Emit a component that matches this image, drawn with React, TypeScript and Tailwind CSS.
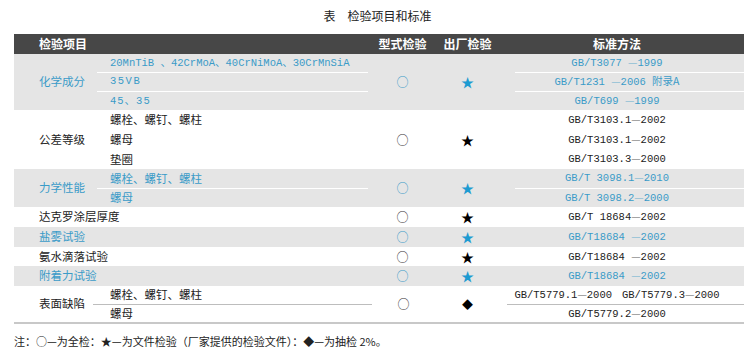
import React from 'react';

const CJK = "font-['Noto_Sans_CJK_SC',sans-serif]";
const MONO = "font-['Liberation_Mono','Noto_Sans_CJK_SC',monospace]";

// a standard code like GB/T3077—1999, dash drawn lighter as in the print
function Code({ a, b, tail }: { a: string; b: string; tail?: string }) {
  return (
    <span className={`${MONO} text-[10.5px] whitespace-pre`}>
      {a}
      <span className={`${CJK} opacity-50`}>—</span>
      {b}
      {tail && <span className={CJK}>{tail}</span>}
    </span>
  );
}

function Mark({ kind, blue }: { kind: 'circle' | 'star' | 'diamond'; blue?: boolean }) {
  const color = blue ? 'text-[#1d9bd1]' : 'text-black';
  if (kind === 'circle')
    return <span className={`${CJK} text-[12px] ${blue ? 'text-[#3a9bc8]' : 'text-[#333]'}`}>○</span>;
  if (kind === 'star') return <span className={`${CJK} text-[13px] ${color}`}>★</span>;
  return <span className={`${CJK} text-[11px] ${color}`}>◆</span>;
}

type Group = {
  name: string;
  blue: boolean;
  height: string;
  subs: React.ReactNode[];
  codes: React.ReactNode[];
  mark: 'star' | 'diamond';
  lines: boolean;
};

const groups: Group[] = [
  {
    name: '化学成分',
    blue: true,
    height: 'h-[56px]',
    lines: true,
    mark: 'star',
    subs: [
      <span className={`${MONO} text-[10.5px] whitespace-pre`}>
        20MnTiB <span className={CJK}>、</span>42CrMoA<span className={CJK}>、</span>40CrNiMoA<span className={CJK}>、</span>30CrMnSiA
      </span>,
      <span className={`${MONO} text-[10.5px] tracking-[1.5px]`}>35VB</span>,
      <span className={`${MONO} text-[10.5px] tracking-[1px] whitespace-pre`}>
        45<span className={CJK}>、</span>35
      </span>,
    ],
    codes: [
      <Code a="GB/T3077 " b="1999" />,
      <Code a="GB/T1231 " b="2006 " tail="附录A" />,
      <Code a="GB/T699 " b="1999" />,
    ],
  },
  {
    name: '公差等级',
    blue: false,
    height: 'h-[59px]',
    lines: false,
    mark: 'star',
    subs: ['螺栓、螺钉、螺柱', '螺母', '垫圈'],
    codes: [<Code a="GB/T3103.1" b="2002" />, <Code a="GB/T3103.1" b="2002" />, <Code a="GB/T3103.3" b="2000" />],
  },
  {
    name: '力学性能',
    blue: true,
    height: 'h-[38px]',
    lines: true,
    mark: 'star',
    subs: ['螺栓、螺钉、螺柱', '螺母'],
    codes: [<Code a="GB/T 3098.1" b="2010" />, <Code a="GB/T 3098.2" b="2000" />],
  },
];

const singles = [
  { name: '达克罗涂层厚度', blue: false, h: 'h-[20px]', code: <Code a="GB/T 18684" b="2002" /> },
  { name: '盐雾试验', blue: true, h: 'h-[20px]', code: <Code a="GB/T18684 " b="2002" /> },
  { name: '氨水滴落试验', blue: false, h: 'h-[19px]', code: <Code a="GB/T18684 " b="2002" /> },
  { name: '附着力试验', blue: true, h: 'h-[20px]', code: <Code a="GB/T18684 " b="2002" /> },
];

function GroupBlock({ g }: { g: Group }) {
  const bg = g.blue ? 'bg-[#e5e5e5] text-[#3a9bc8]' : 'bg-white text-[#222]';
  return (
    <div className={`flex ${g.height} ${bg}`}>
      <div className={`w-[83px] pl-[25px] flex items-center ${CJK} text-[11.5px]`}>{g.name}</div>
      <div className="w-[273px] flex flex-col">
        {g.subs.map((s, i) => (
          <div
            key={i}
            className={`flex-1 flex items-center pl-[13px] mr-[2px] ${CJK} text-[11.5px] ${
              g.lines && i < g.subs.length - 1 ? 'border-b border-white' : ''
            }`}
          >
            {s}
          </div>
        ))}
      </div>
      <div className="w-[65px] flex items-center justify-center">
        <Mark kind="circle" blue={g.blue} />
      </div>
      <div className="w-[65px] flex items-center justify-center">
        <Mark kind={g.mark} blue={g.blue} />
      </div>
      <div className="flex-1 flex flex-col ml-[15px]">
        {g.codes.map((c, i) => (
          <div
            key={i}
            className={`flex-1 flex items-center justify-center pr-[25px] ${
              g.lines && i < g.codes.length - 1 ? 'border-b border-white' : ''
            }`}
          >
            {c}
          </div>
        ))}
      </div>
    </div>
  );
}

export default function App() {
  return (
    <div className="w-[755px] h-[350px] bg-white overflow-hidden">
      <div className={`pt-[7px] h-[34px] text-center ${CJK} text-[12px] text-[#222]`}>表　检验项目和标准</div>

      <div className="mx-[14px] w-[730px]">
        <div className={`flex h-[20px] items-center bg-[#474747] text-white font-bold ${CJK} text-[12px]`}>
          <div className="w-[356px] pl-[25px]">检验项目</div>
          <div className="w-[65px] text-center">型式检验</div>
          <div className="w-[65px] text-center">出厂检验</div>
          <div className="flex-1 text-center pl-[15px] pr-[25px]">标准方法</div>
        </div>

        {groups.map((g) => (
          <GroupBlock key={g.name} g={g} />
        ))}

        {singles.map((s) => (
          <div
            key={s.name}
            className={`flex items-center ${s.h} ${s.blue ? 'bg-[#e5e5e5] text-[#3a9bc8]' : 'bg-white text-[#222]'}`}
          >
            <div className={`w-[356px] pl-[25px] ${CJK} text-[11.5px]`}>{s.name}</div>
            <div className="w-[65px] flex justify-center">
              <Mark kind="circle" blue={s.blue} />
            </div>
            <div className="w-[65px] flex justify-center">
              <Mark kind="star" blue={s.blue} />
            </div>
            <div className="flex-1 flex justify-center pl-[15px] pr-[25px]">{s.code}</div>
          </div>
        ))}

        <div className="flex h-[38px] bg-white text-[#222] border-b-2 border-[#c8c8c8]">
          <div className={`w-[79px] pl-[25px] flex items-center ${CJK} text-[11.5px]`}>表面缺陷</div>
          <div className="w-[279px] flex flex-col">
            <div className={`flex-1 flex items-center pl-[17px] border-b border-[#bdbdbd] ${CJK} text-[11.5px]`}>
              螺栓、螺钉、螺柱
            </div>
            <div className={`flex-1 flex items-center pl-[17px] ${CJK} text-[11.5px]`}>螺母</div>
          </div>
          <div className="w-[63px] flex items-center justify-center">
            <Mark kind="circle" />
          </div>
          <div className="w-[65px] flex items-center justify-center">
            <Mark kind="diamond" />
          </div>
          <div className="flex-1 flex flex-col ml-[7px]">
            <div className="flex-1 flex items-center justify-center pr-[17px] border-b border-[#bdbdbd] gap-[10px]">
              <Code a="GB/T5779.1" b="2000" />
              <Code a="GB/T5779.3" b="2000" />
            </div>
            <div className="flex-1 flex items-center justify-center pr-[17px]">
              <Code a="GB/T5779.2" b="2000" />
            </div>
          </div>
        </div>
      </div>

      <div className={`mt-[9px] pl-[14px] ${CJK} text-[11px] text-[#222]`}>
        注：○—为全检：★—为文件检验（厂家提供的检验文件）：◆—为抽检 2%。
      </div>
    </div>
  );
}
